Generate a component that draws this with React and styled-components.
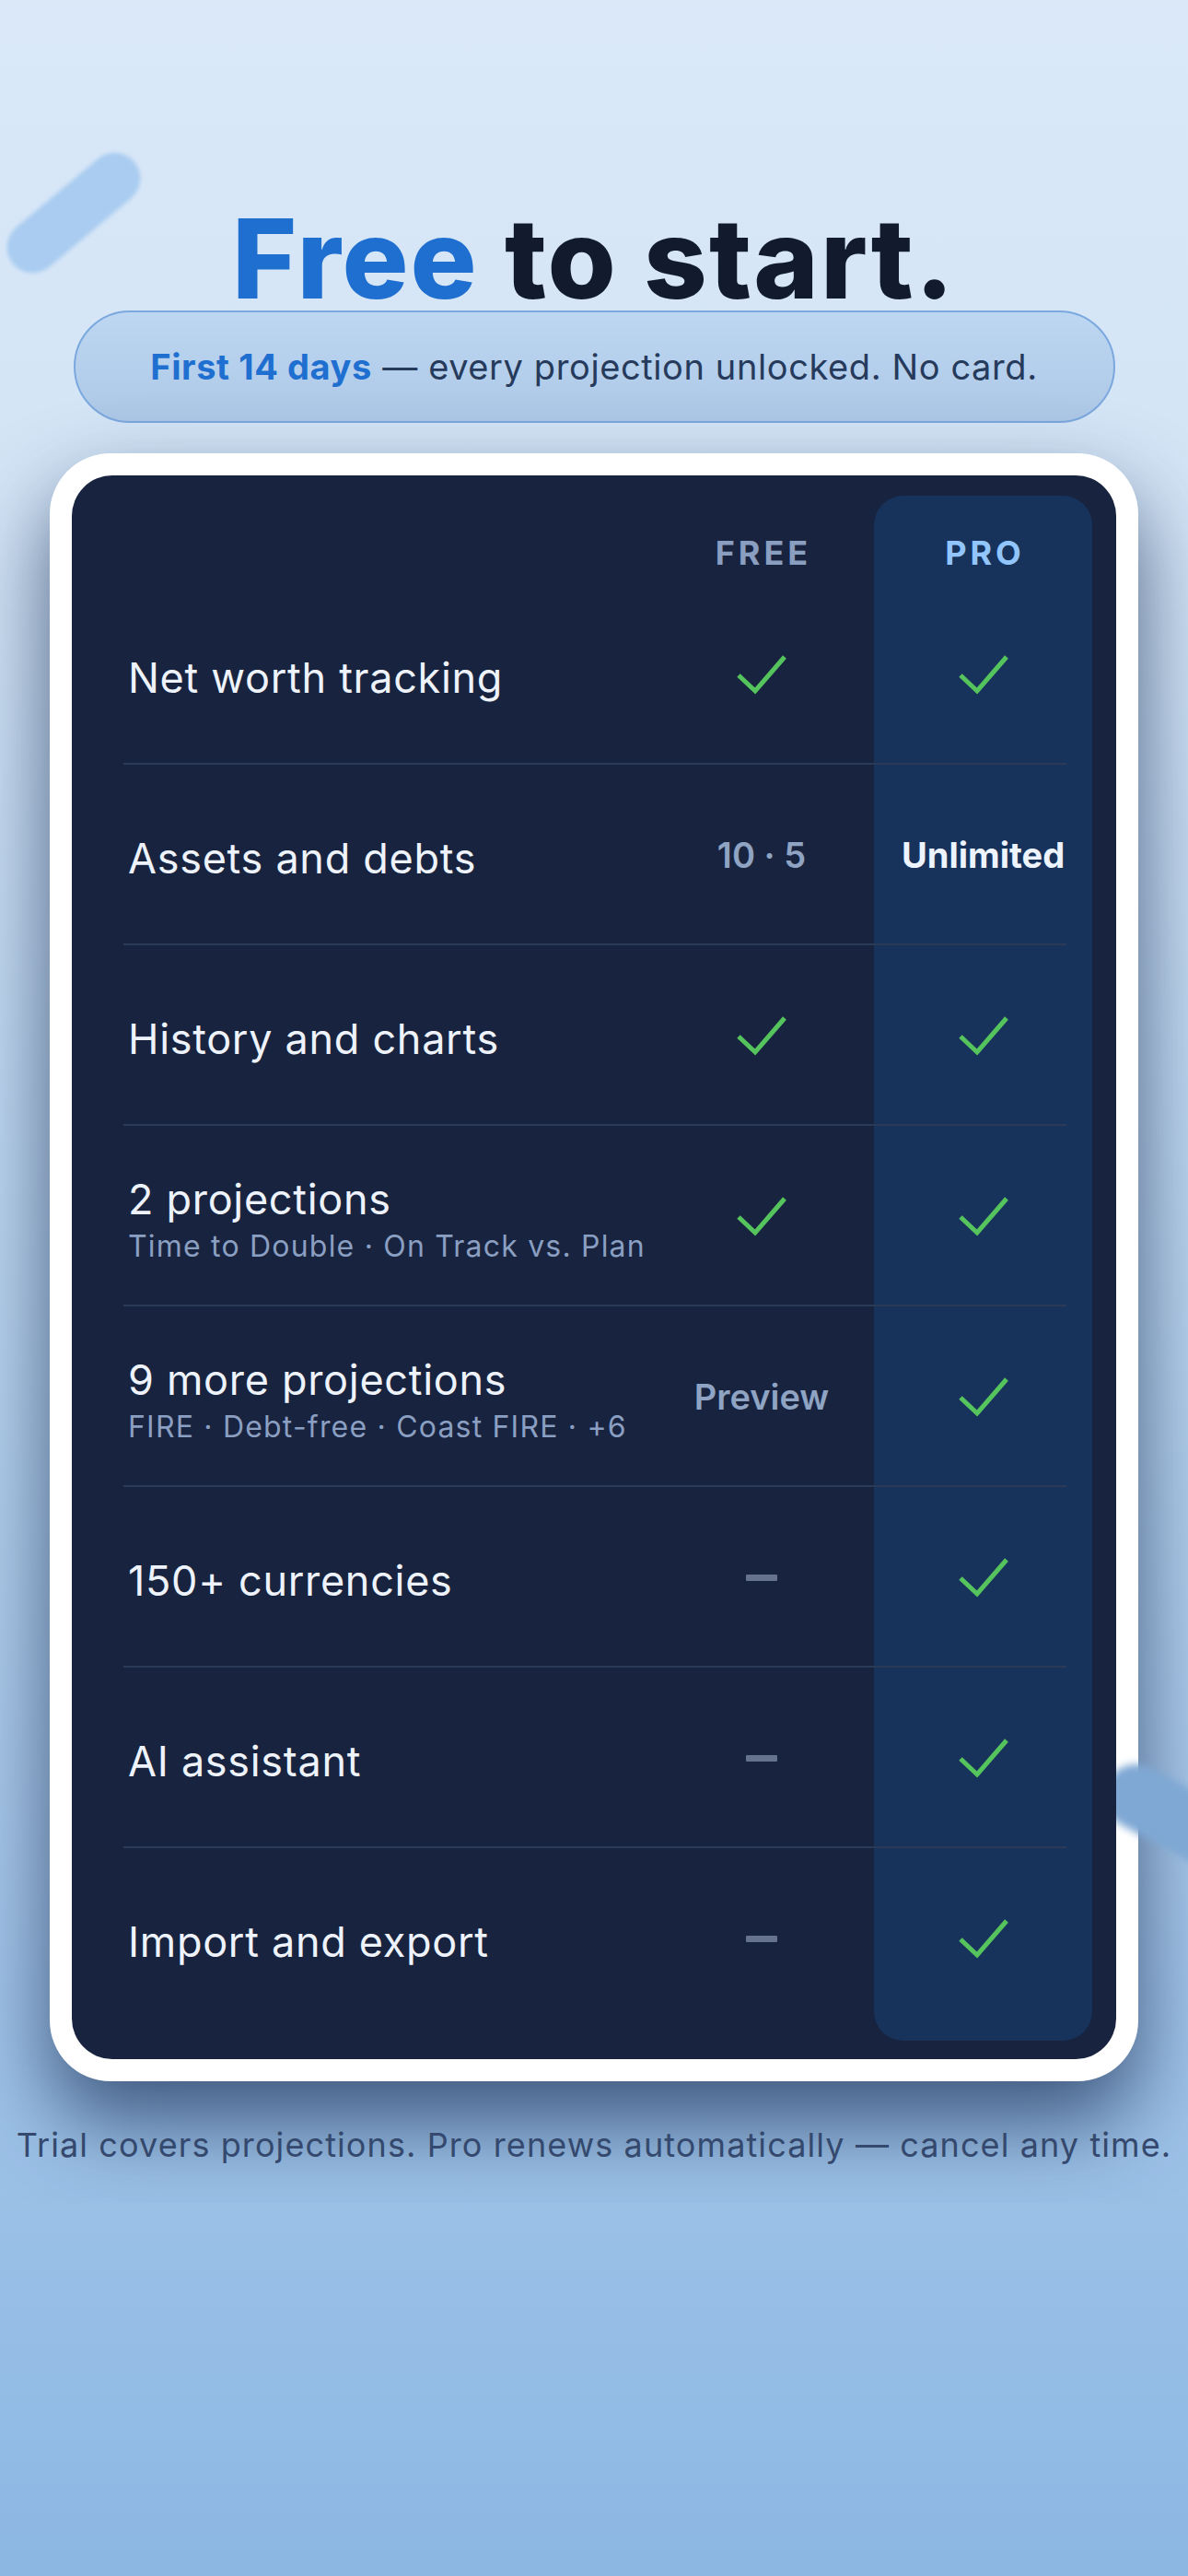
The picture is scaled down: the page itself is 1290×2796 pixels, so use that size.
import React from 'react';
import styled, { createGlobalStyle } from 'styled-components';

const GlobalStyle = createGlobalStyle`
  html, body {
    margin: 0;
    padding: 0;
  }
  body {
    font-family: Inter, "Noto Sans", sans-serif;
    background: #8cb7e3;
  }
`;

const Page = styled.div`
  position: relative;
  width: 1290px;
  min-height: 2796px;
  overflow: hidden;
  background: linear-gradient(180deg, #dae8f8 0%, #d2e4f6 22%, #bcd6f0 48%, #a2c5e9 78%, #8cb7e3 100%);
`;

const Hero = styled.section`
  position: relative;
  overflow: hidden;
  display: flex;
  flex-direction: column;
  align-items: center;
  padding: 231px 0 41px;
`;

const CornerCapsule = styled.div`
  position: absolute;
  left: -6px;
  top: 203px;
  width: 172px;
  height: 56px;
  border-radius: 28px;
  background: #a9ccf0;
  transform: rotate(-40deg);
  filter: blur(2px);
`;

const SideCapsule = styled.div`
  position: absolute;
  left: 1190px;
  top: 1950px;
  width: 220px;
  height: 70px;
  border-radius: 35px;
  background: #7fa8d4;
  transform: rotate(28deg);
  filter: blur(4px);
`;

const Title = styled.h1`
  margin: 0;
  font-size: 120px;
  line-height: 100px;
  font-weight: 800;
  letter-spacing: 2px;
  color: #111b2d;

  & > span {
    color: #1f6fd0;
  }
`;

const TrialPill = styled.div`
  margin-top: 6px;
  width: 1131px;
  height: 122px;
  box-sizing: border-box;
  border: 2px solid #7ba8de;
  border-radius: 61px;
  background: linear-gradient(180deg, #bdd7f2 0%, #adc8e6 100%);
  display: flex;
  align-items: center;
  justify-content: center;
  font-size: 38px;
  letter-spacing: 0.6px;
  color: #263a5c;

  & > strong {
    font-weight: 700;
    color: #1f6fd0;
  }
`;

const CardFrame = styled.div`
  margin-top: 33px;
  width: 1182px;
  box-sizing: border-box;
  padding: 24px;
  border-radius: 66px;
  background: #ffffff;
  box-shadow: 0 44px 90px rgba(18, 40, 78, 0.7);
`;

const CardInner = styled.div`
  position: relative;
  padding: 22px 26px 33px 56px;
  border-radius: 44px;
  background: #18233f;
`;

const ProHighlight = styled.div`
  position: absolute;
  top: 22px;
  bottom: 20px;
  right: 26px;
  width: 237px;
  border-radius: 32px;
  background: #18335b;
`;

const Table = styled.div`
  position: relative;
`;

const HeaderRow = styled.div`
  display: grid;
  grid-template-columns: 1fr 244px 237px;
  align-items: center;
  height: 96px;
  box-sizing: border-box;
  padding-top: 28px;
`;

const PlanLabel = styled.div`
  text-align: center;
  padding-left: 4px;
  font-size: 36px;
  font-weight: 700;
  letter-spacing: 4px;
  color: ${p => (p.$pro ? '#93c5fd' : '#8a9ec0')};
`;

const Row = styled.div`
  display: grid;
  grid-template-columns: 1fr 244px 237px;
  align-items: center;
  height: 196px;
  background: ${p =>
    p.$last
      ? 'none'
      : 'linear-gradient(#2a3a57, #2a3a57) no-repeat left bottom / calc(100% - 28px) 2px'};
`;

const Feature = styled.div`
  padding: 8px 0 0 5px;
`;

const FeatureName = styled.div`
  font-size: 45px;
  line-height: 52px;
  letter-spacing: 0.7px;
  color: #eef3fb;
`;

const FeatureSub = styled.div`
  margin-top: 6px;
  font-size: 32px;
  line-height: 38px;
  letter-spacing: 1.2px;
  color: #8a9fc1;
`;

const Cell = styled.div`
  display: flex;
  align-items: center;
  justify-content: center;
`;

const Value = styled.span`
  font-size: 38px;
  font-weight: ${p => (p.$strong ? 700 : 600)};
  color: ${p => (p.$strong ? '#eef4fd' : '#8fa3c3')};
`;

const Dash = styled.span`
  width: 34px;
  height: 7px;
  border-radius: 1px;
  background: #65738f;
`;

const Footnote = styled.p`
  margin: 47px 0 0;
  font-size: 36px;
  line-height: 44px;
  letter-spacing: 1.1px;
  color: #34496d;
  white-space: nowrap;
  text-align: center;
`;

const Check = () => (
  <svg width="54" height="44" viewBox="0 0 54 44" fill="none">
    <polyline points="2,23 20,40 52,3" stroke="#55c45d" strokeWidth="5" strokeLinejoin="miter" />
  </svg>
);

const renderMark = mark => {
  if (mark === 'check') return <Check />;
  if (mark === 'dash') return <Dash />;
  return <Value $strong={mark === 'Unlimited'}>{mark}</Value>;
};

const features = [
  { name: 'Net worth tracking', free: 'check', pro: 'check' },
  { name: 'Assets and debts', free: '10 · 5', pro: 'Unlimited' },
  { name: 'History and charts', free: 'check', pro: 'check' },
  { name: '2 projections', sub: 'Time to Double · On Track vs. Plan', free: 'check', pro: 'check' },
  { name: '9 more projections', sub: 'FIRE · Debt-free · Coast FIRE · +6', free: 'Preview', pro: 'check' },
  { name: '150+ currencies', free: 'dash', pro: 'check' },
  { name: 'AI assistant', free: 'dash', pro: 'check' },
  { name: 'Import and export', free: 'dash', pro: 'check' },
];

export default function App() {
  return (
    <Page>
      <GlobalStyle />
      <Hero>
        <CornerCapsule />
        <SideCapsule />
        <Title>
          <span>Free</span> to start.
        </Title>
        <TrialPill>
          <strong>First 14 days</strong>&nbsp;— every projection unlocked. No card.
        </TrialPill>
        <CardFrame>
          <CardInner>
            <ProHighlight />
            <Table>
              <HeaderRow>
                <div />
                <PlanLabel>FREE</PlanLabel>
                <PlanLabel $pro>PRO</PlanLabel>
              </HeaderRow>
              {features.map((f, i) => (
                <Row key={f.name} $last={i === features.length - 1}>
                  <Feature>
                    <FeatureName>{f.name}</FeatureName>
                    {f.sub && <FeatureSub>{f.sub}</FeatureSub>}
                  </Feature>
                  <Cell>{renderMark(f.free)}</Cell>
                  <Cell>{renderMark(f.pro)}</Cell>
                </Row>
              ))}
            </Table>
          </CardInner>
        </CardFrame>
        <Footnote>Trial covers projections. Pro renews automatically — cancel any time.</Footnote>
      </Hero>
    </Page>
  );
}
